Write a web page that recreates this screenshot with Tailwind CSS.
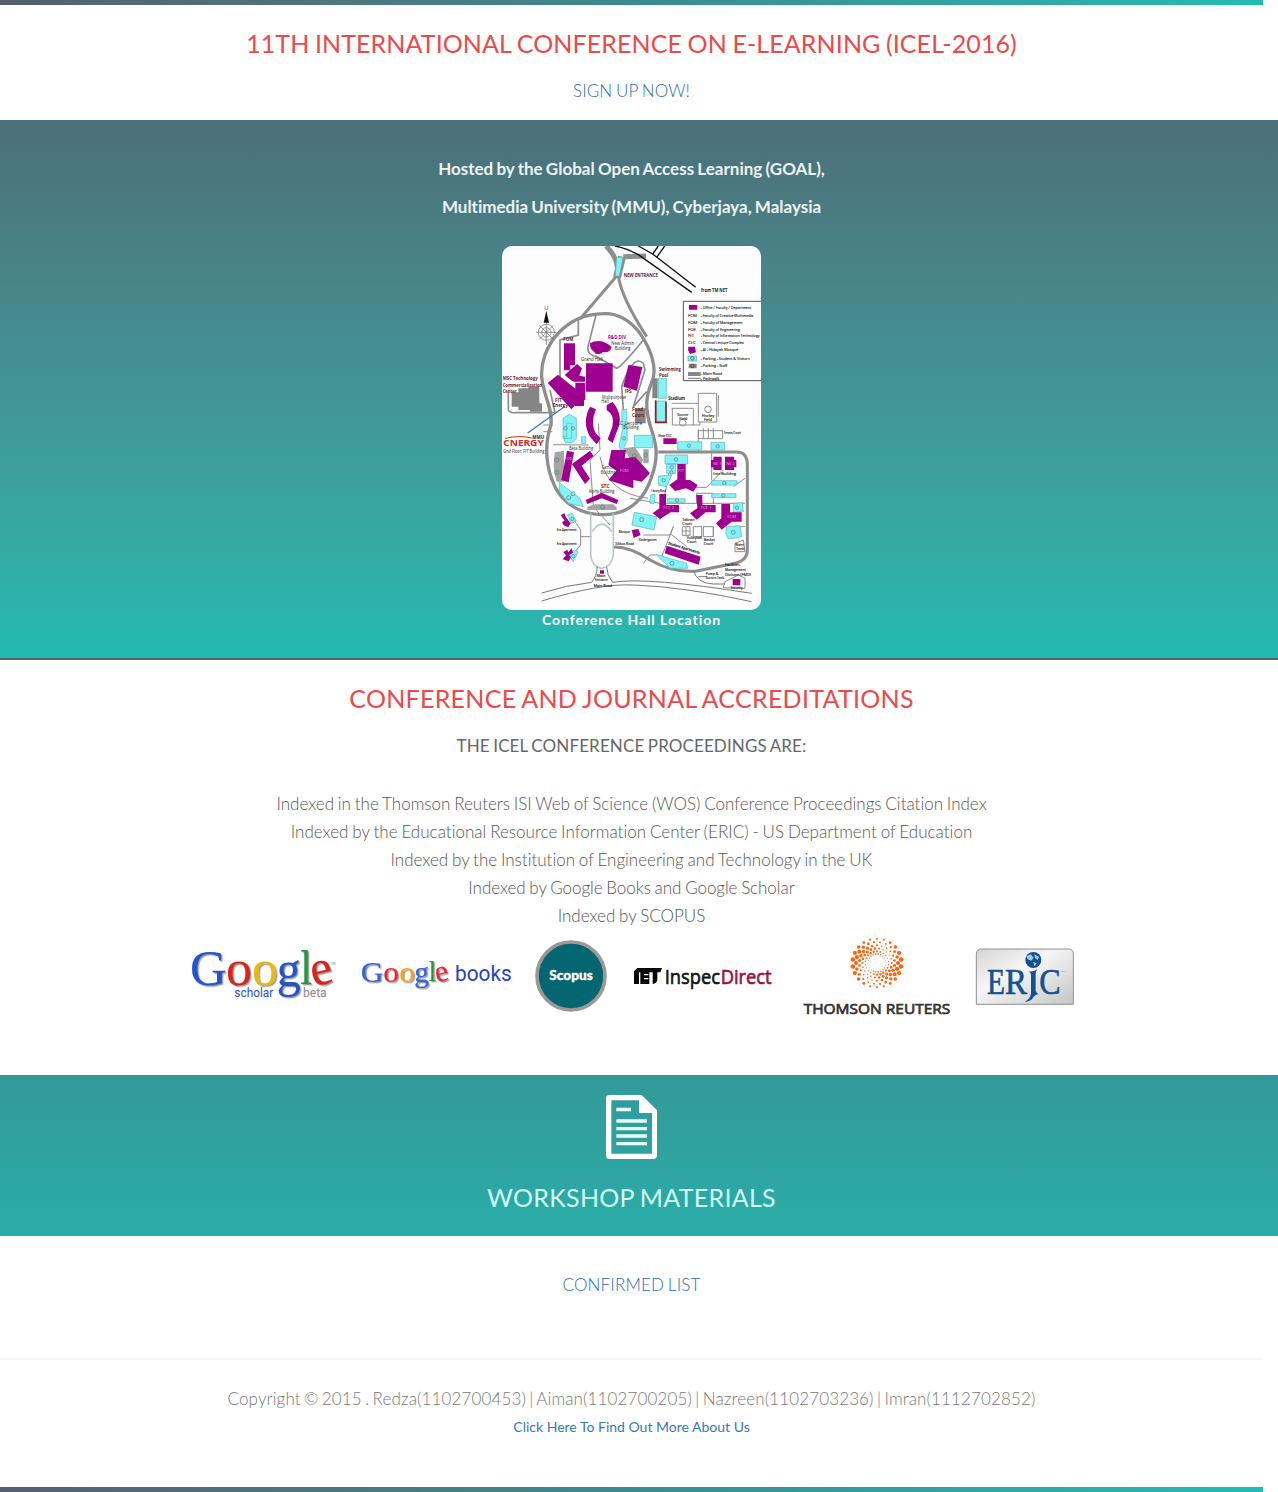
<!DOCTYPE html>
<html lang="en">
<head>
<meta charset="utf-8">
<title>ICEL-2016</title>
<script src="https://cdn.jsdelivr.net/npm/@tailwindcss/browser@4"></script>
</head>
<body class="bg-white font-['Lato',sans-serif] text-[#666] overflow-x-hidden [font-variant-ligatures:none]">
<div class="w-[1278px] h-[1492px] overflow-hidden flex flex-col text-center whitespace-nowrap">
  <div class="w-[1263px] h-[5px] bg-linear-to-r from-[#565f6e] via-[#3c8a8e] to-[#22bbb2]"></div>
  <header class="w-[1263px] h-[115px] flex flex-col items-center pt-[18px]">
    <h1 class="text-[25px] leading-10 text-[#ea4a4a] tracking-[0.1px] [word-spacing:-1px]">11TH INTERNATIONAL CONFERENCE ON E-LEARNING (ICEL-2016)</h1>
    <a class="mt-[14px] text-[17px] leading-7 font-light text-[#2a6db0] tracking-[0.12px] [word-spacing:-1px]">SIGN UP NOW!</a>
  </header>
  <section class="h-[540px] border-b-2 border-[#565f6e] bg-linear-to-b from-[#4b6f78] to-[#22bab1] text-white">
    <div class="w-[1263px] flex flex-col items-center pt-[30px]">
      <p class="text-[17px] leading-[38px] font-bold text-white/90 [word-spacing:-0.9px]">Hosted by the Global Open Access Learning (GOAL),</p>
      <p class="text-[17px] leading-[38px] font-bold text-white/90 [word-spacing:-1px]">Multimedia University (MMU), Cyberjaya, Malaysia</p>
      <svg id="map" class="mt-5 rounded-[10px] bg-[#fdfdfd]" width="259" height="364" viewBox="6 18 777 1092" font-family="Open Sans, sans-serif" font-size="17" fill="#222">
        <!-- roads -->
        <g fill="none" stroke="#8d8d8d">
          <path stroke-width="10" d="M310 221C190 223 120 325 125 410C130 470 158 500 153 555C130 620 140 690 165 740C190 790 240 824 310 824C400 824 440 760 455 710C480 640 465 600 450 555C435 500 438 470 454 430C474 390 455 330 420 280C390 240 350 218 310 221Z"/>
          <path stroke-width="24" d="M366 50L351 112"/><path stroke-width="15" d="M318 18Q350 50 352 82M438 48L370 50"/>
          <path stroke-width="9" d="M350 108L240 237M355 108Q365 175 440 290"/>
          <path stroke-width="9" d="M475 636H710Q742 636 742 675V930Q742 965 695 972L590 993Q520 1000 450 960Q390 920 342 921"/>
          <path stroke-width="5" d="M235 235V285L180 300V420M288 225L264 320Q260 345 290 350L350 385Q365 380 430 300M370 510L365 440Q400 340 430 370L435 390L400 500L440 455M25 455V510Q30 520 50 518H165L150 450"/>
          <path stroke-width="3" d="M130 555H157M130 575H157M160 614L265 615M295 550L300 630L270 660L280 800L330 855M300 650Q320 760 445 775M390 775L480 790H735M480 840L510 680M550 742H620L670 690M635 640V720M590 790V760H640V790M430 885H510L520 860L485 950M510 880L560 920M215 830L242 870V915L225 935M242 890H275M735 715L700 740M700 860H735M430 970L450 945H470"/>
          <path stroke="#b5c9c7" stroke-width="5" d="M272 820V945Q275 980 305 985Q335 980 340 945V820M277 875Q305 830 335 875"/>
          <path stroke="#777" stroke-width="3" d="M125 1059Q200 1035 275 1027Q290 1010 292 980M320 980Q320 1005 338 1027Q440 1010 755 1060M125 1083Q300 1030 400 1035Q550 1040 755 1085M580 990Q590 1030 640 1032H675M595 1010H620"/>
          <g stroke-width="3"><path d="M515 490H595M515 505H580V555M517 505V555H600V545M595 460H650V546H595ZM655 465V530M595 568V640M595 572H668V596H595ZM610 565V596M625 565V596M640 565V596M580 860H605V890H580ZM610 860H640V890H610ZM640 860V890M547 860H570V886H547ZM547 873H570M558 860V886M705 910L730 900L735 935L705 935ZM675 1025L715 1005L735 1015V1045L670 1043Z"/><circle cx="624" cy="508" r="10"/><circle cx="548" cy="548" r="10"/></g>
        </g>
        <g fill="none" stroke="#111" stroke-width="4"><path d="M345 18Q380 24 415 44L575 157M415 18L458 42L587 142M458 42L475 18M470 52L494 18"/></g>
        <!-- compass -->
        <g fill="none" stroke="#666" stroke-width="2"><circle cx="139" cy="277" r="24"/><circle cx="139" cy="277" r="14"/><path d="M108 277H170M139 245V315M118 256L160 298M160 256L118 298"/></g>
        <path fill="#111" d="M139 212L147 248H131Z"/><text x="133" y="209">U</text>
        <!-- grey buildings -->
        <g fill="#858585"><path d="M35 457H55V445H85V440H118V490H126V515H90V510H55V500H35ZM457 415H473V475H457ZM405 505H437V550H405Z"/><path fill="#a5a5a5" d="M165 637L192 632V725H170Q155 680 165 637ZM262 800L285 793H340L350 802V810H262ZM370 625L405 620L430 660L420 680L395 665ZM430 628H446V670H430Z"/></g>
        <!-- parking -->
        <g fill="#83f3f5" stroke="#58b3bb" stroke-width="2">
          <path d="M350 52H369L358 108H346Z"/><path d="M475 415H499V475H475ZM470 483H498V546H470Z"/>
          <path d="M189 535L208 523L229 535V595L218 608H196L189 590H200V550H215V595H189Z"/><path d="M365 512L380 507L382 600L366 635L357 620L367 570Z"/>
          <path d="M403 586H458V623H403ZM533 605H605V630H533ZM633 607H674V630H633ZM495 645H563V672H495ZM475 708L515 705L500 740L475 735ZM500 672H527V700H500ZM635 722H711V735H635ZM635 761H708V773H635ZM503 776H555V787H503ZM452 765L465 762L463 790H450ZM700 790L727 788L730 815L700 818ZM680 860L720 857L725 890L685 897L677 880ZM403 817L470 830L462 870L396 855ZM468 943L560 970L563 985L510 985ZM178 727L200 745L240 775L250 800L205 790L178 755ZM203 825L216 820L229 843L214 850ZM206 943L223 930L234 937L219 965ZM245 590H257V610H245Z"/>
        </g>
        <!-- faculty buildings -->
        <g fill="#a0008f">
          <path d="M192 310H225V376H211V391H192ZM194 405L231 372L246 385L238 407L255 410V425H222L212 420ZM143 429L174 404L226 446V428H256V480H252V498H225V485H234L214 508ZM258 370H338V455H258ZM270 310Q300 292 335 320Q330 340 308 336Q305 345 287 341L280 333Q269 327 270 310ZM385 375L427 381L411 452L370 440Z"/>
          <path d="M270 500L288 508Q270 550 287 580L302 595L290 613L270 590Q245 545 270 500ZM320 495L338 486Q374 530 350 575L338 609L323 598L337 560Q345 525 320 510Z"/>
          <path d="M201 632L222 637L206 727L184 720ZM216 672L270 632L281 648L245 677L270 716L255 732ZM257 780L305 758L355 780L350 792L305 775L262 792ZM334 630L378 630L374 655L405 650L450 700L425 725L400 720L400 745L325 720L349 692L325 675Z"/>
          <path d="M490 595H530V612H490ZM640 650H665V690H640V682H633V660H640ZM675 650H702V660H709V682H702V690H675ZM532 672H557V720H570L593 735L580 755L558 745L525 753L508 735L532 718ZM478 762H498V795H537V817H512L480 837L458 820L478 805ZM589 765H607V795H647V817H617L590 839L570 820L592 805ZM664 792H690V817H725V845H695L665 869L648 850L664 835ZM500 917L602 950L596 974L494 940ZM395 870L415 867L422 885L401 894ZM300 991H312V1001H300ZM698 1017H721V1036H698Z"/>
          <path d="M182 825L193 820L198 832L212 850L205 862L191 856L186 846L194 842ZM190 937L202 929L205 937L215 925L219 938L207 946L213 952L206 964L188 958L198 946Z"/>
        </g>
        <g fill="none" stroke="#921c21" stroke-width="5"><path d="M467 481V547H498V485"/></g>
        <path stroke="#3976c6" stroke-width="4" d="M83 579L193 500"/>
        <!-- parking symbols -->
        <g fill="none" stroke="#50787c" stroke-width="2"><circle cx="196" cy="565" r="5"/><circle cx="219" cy="565" r="5"/><circle cx="567" cy="617" r="5"/><circle cx="653" cy="619" r="5"/><circle cx="528" cy="658" r="5"/><circle cx="515" cy="682" r="5"/><circle cx="514" cy="697" r="5"/><circle cx="491" cy="721" r="5"/><circle cx="673" cy="729" r="5"/><circle cx="670" cy="767" r="5"/><circle cx="531" cy="781" r="5"/><circle cx="711" cy="803" r="5"/><circle cx="700" cy="877" r="6"/><circle cx="425" cy="839" r="6"/><circle cx="516" cy="970" r="6"/><circle cx="206" cy="773" r="6"/><circle cx="219" cy="761" r="6"/><circle cx="170" cy="660" r="6"/><circle cx="170" cy="697" r="6"/><circle cx="308" cy="801" r="6"/><circle cx="437" cy="645" r="5"/><circle cx="403" cy="648" r="6"/><circle cx="217" cy="837" r="5"/><circle cx="220" cy="949" r="5"/><circle cx="372" cy="595" r="5"/></g>
        <!-- legend -->
        <path d="M783 184H550V422H783" fill="#fefefe" stroke="#555" stroke-width="3"/>
        <path fill="#a0008f" d="M567 195H592V209H567ZM565 320L585 320L588 337L570 342L564 330Z"/>
        <path fill="#83f3f5" stroke="#333" d="M564 348H590V363H564Z"/><path fill="#888" d="M566 371H590V385H566ZM564 396H602V408H564Z"/><path stroke="#777" stroke-width="3" d="M564 415H603"/><g fill="none" stroke="#333" stroke-width="2"><circle cx="577" cy="355" r="5"/><circle cx="577" cy="378" r="5"/></g>
        <g font-size="13" stroke="#222" stroke-width=".4">
          <text x="602" y="207" textLength="152">- Office / Faculty / Department</text>
          <text x="564" y="231">FCM</text><text x="602" y="231" textLength="158">- Faculty of Creative Multimedia</text>
          <text x="564" y="252">FOM</text><text x="602" y="252" textLength="126">- Faculty of Management</text>
          <text x="564" y="272">FOE</text><text x="602" y="272" textLength="118">- Faculty of Engineering</text>
          <text x="564" y="292">FIT</text><text x="602" y="292" textLength="177">- Faculty of Information Technology</text>
          <text x="564" y="311">CLC</text><text x="602" y="311" textLength="130">- Central Lecture Complex</text>
          <text x="602" y="333" textLength="112">- Al - Hidayah Mosque</text>
          <text x="602" y="360" textLength="147">- Parking - Student &amp; Visitors</text>
          <text x="602" y="382" textLength="80">- Parking - Staff</text>
          <text x="602" y="404" textLength="64">- Main Road</text><text x="602" y="419" textLength="56">- Pathwalk</text>
        </g>
        <!-- place names -->
        <g font-weight="700" font-size="15" fill="#72191c">
          <text x="371" y="110" textLength="103">NEW ENTRANCE</text><text x="190" y="304" textLength="30">FOM</text><text x="8" y="421" textLength="105">MSC Technology</text><text x="8" y="440" textLength="119">Commercialization</text><text x="8" y="458" textLength="42">Center</text><text x="165" y="486" textLength="20">FIT</text><text x="158" y="501" textLength="46">Energy</text><text x="374" y="459" textLength="21">IPS</text><text x="477" y="394" textLength="66">Swimming</text><text x="477" y="411" textLength="28">Pool</text><text x="396" y="512" textLength="34">Food</text><text x="396" y="530" textLength="36">Court</text><text x="304" y="745" textLength="24">STC</text>
          <text x="324" y="296" textLength="54" fill="#a0008f">R&amp;D DIV</text>
          <g fill="#222"><text x="603" y="155" textLength="79">from TM NET</text><text x="505" y="481" textLength="50">Stadium</text><text x="97" y="598" textLength="35">MMU</text></g>
          <text x="10" y="619" font-size="24" textLength="121" fill="#d32e25">CNERGY</text>
        </g>
        <path stroke="#d32e25" stroke-width="3" d="M15 595Q60 585 95 594" fill="none"/>
        <g font-size="14">
          <text x="10" y="639" textLength="123">Gnd Floor, FIT Building</text><text x="334" y="315" textLength="68">New Admin</text><text x="344" y="329" textLength="48">Building</text><text x="243" y="364" textLength="65">Grand Hall</text><text x="306" y="477" textLength="72">Multipurpose</text><text x="304" y="490" textLength="22">Hall</text><text x="342" y="554" textLength="85">CLC Lecture</text><text x="370" y="568" textLength="46">Building</text><text x="208" y="629" textLength="71">Beta Building</text><text x="305" y="688" textLength="40">Gamma</text><text x="302" y="701" textLength="44">Building</text><text x="266" y="760" textLength="77">Alpha Building</text>
        </g>
        <g font-size="11" stroke="#222" stroke-width=".4">
          <text x="170" y="874" textLength="60">Era Apartment</text><text x="170" y="916" textLength="60">Era Apartment</text><text x="281" y="1041" textLength="55">Main Road</text><text x="290" y="1010">Main</text><text x="285" y="1022" textLength="38">Entrance</text><text x="356" y="880" textLength="34">Mosque</text><text x="346" y="915" textLength="56">Silibus Road</text><text x="416" y="902" textLength="54">Kindergarten</text><text x="532" y="529">Soccer</text><text x="538" y="541">Field</text><text x="606" y="532">Hockey</text><text x="612" y="544">Field</text><text x="671" y="582" textLength="52">Tennis Court</text><text x="475" y="592" textLength="40">New CLC</text><text x="640" y="705" textLength="68">Inte Building</text><text x="454" y="757" textLength="44">Library Road</text><text x="547" y="842">Tabran</text><text x="547" y="854">Court</text><text x="561" y="896" textLength="44">Volleyball</text><text x="561" y="908">Court</text><text x="611" y="902">Basket</text><text x="611" y="914">Court</text><text x="706" y="918" textLength="26">Water</text><text x="708" y="930">Tank</text><text x="504" y="913" textLength="98" transform="rotate(17 504 913)" font-weight="700">Student Apartments</text><text x="675" y="979" textLength="44">Facilities</text><text x="675" y="993" textLength="63">Management</text><text x="675" y="1007" textLength="78">Division (FMD)</text><text x="617" y="1006" textLength="38">Pump &amp;</text><text x="617" y="1018" textLength="55">Suction Tank</text><text x="692" y="1047" textLength="36">Security</text>
        </g>
        <g font-size="13" fill="#e8a8e0"><text x="639" y="674" textLength="25">NE 1</text><text x="679" y="674" textLength="25">NE 2</text><text x="360" y="695" textLength="26">FCM</text><text x="193" y="660" textLength="24">FOE</text><text x="535" y="695">FIT</text><text x="490" y="807">FCE 2</text><text x="602" y="807">FCE 1</text><text x="682" y="835">FCM</text></g>
      </svg>
      <p class="text-[14px] leading-5 font-bold tracking-[0.93px]">Conference Hall Location</p>
    </div>
  </section>
  <section class="w-[1263px] h-[415px] flex flex-col items-center pt-[18px]">
    <h2 class="text-[25px] leading-10 text-[#ea4a4a] tracking-[0.28px] [word-spacing:-1px]">CONFERENCE AND JOURNAL ACCREDITATIONS</h2>
    <h3 class="mt-[14px] text-[17px] leading-7 tracking-[0.12px] [word-spacing:-1px]">THE ICEL CONFERENCE PROCEEDINGS ARE:</h3>
    <div class="mt-[30px] text-[17px] leading-7 font-light text-[#555] [word-spacing:-0.8px]">
      <p>Indexed in the Thomson Reuters ISI Web of Science (WOS) Conference Proceedings Citation Index</p>
      <p class="tracking-[0.02px]">Indexed by the Educational Resource Information Center (ERIC) - US Department of Education</p>
      <p>Indexed by the Institution of Engineering and Technology in the UK</p>
      <p class="tracking-[-0.06px]">Indexed by Google Books and Google Scholar</p>
      <p>Indexed by SCOPUS</p>
    </div>
    <div class="self-start flex ml-[188px]">
      <svg class="mr-[22px]" width="150" height="95" viewBox="24 0 450 285">
        <defs><filter id="sh" x="-10%" y="-10%" width="120%" height="130%"><feDropShadow dx="4" dy="4" stdDeviation="2" flood-color="#555" flood-opacity=".6"/></filter></defs>
        <g font-family="Liberation Serif, serif" filter="url(#sh)" stroke-width=".6"><text x="30" y="165" font-size="150" textLength="110" lengthAdjust="spacingAndGlyphs" fill="#2456c8" stroke="#2456c8">G</text><text x="138" y="165" font-size="150" textLength="78" lengthAdjust="spacingAndGlyphs" fill="#d4281c" stroke="#d4281c">o</text><text x="216" y="165" font-size="150" textLength="78" lengthAdjust="spacingAndGlyphs" fill="#e6b812" stroke="#e6b812">o</text><text x="290" y="167" font-size="150" textLength="72" lengthAdjust="spacingAndGlyphs" fill="#2456c8" stroke="#2456c8">g</text><text x="361" y="161" font-size="147" textLength="35" lengthAdjust="spacingAndGlyphs" fill="#27963c" stroke="#27963c">l</text><text x="392" y="163" font-size="150" textLength="66" lengthAdjust="spacingAndGlyphs" fill="#d4281c" stroke="#d4281c" transform="rotate(-14 425 130)">e</text></g>
        <g font-family="Roboto, sans-serif" font-size="37"><text x="163" y="201" textLength="117" lengthAdjust="spacingAndGlyphs" fill="#304fc2">scholar</text><text x="369" y="201" textLength="71" lengthAdjust="spacingAndGlyphs" fill="#888">beta</text><text x="454" y="104" font-size="8" fill="#666">TM</text></g>
      </svg>
      <svg class="mr-[21px]" width="154" height="95" viewBox="540 0 462 285">
        <g font-family="Liberation Serif, serif" filter="url(#sh)" font-size="90" stroke-width=".6"><text x="542" y="155" textLength="68" lengthAdjust="spacingAndGlyphs" fill="#3565d0" stroke="#3565d0">G</text><text x="610" y="155" textLength="47" lengthAdjust="spacingAndGlyphs" fill="#e02c35" stroke="#e02c35">o</text><text x="658" y="155" textLength="47" lengthAdjust="spacingAndGlyphs" fill="#f5a316" stroke="#f5a316">o</text><text x="703" y="156" textLength="44" lengthAdjust="spacingAndGlyphs" fill="#3565d0" stroke="#3565d0">g</text><text x="746" y="152" textLength="22" lengthAdjust="spacingAndGlyphs" fill="#27963c" stroke="#27963c">l</text><text x="766" y="153" textLength="40" lengthAdjust="spacingAndGlyphs" fill="#e02c35" stroke="#e02c35" transform="rotate(-14 786 135)">e</text></g>
        <text x="825" y="152" font-family="Roboto, sans-serif" font-size="65" textLength="170" lengthAdjust="spacingAndGlyphs" fill="#2443bd">books</text>
      </svg>
      <svg class="mr-[23px]" width="72" height="95" viewBox="45 0 216 285"><circle cx="153" cy="138" r="102" fill="#046670" stroke="#999" stroke-width="11"/><text x="88" y="149" font-family="Lato, sans-serif" font-weight="900" font-size="39" textLength="130" lengthAdjust="spacingAndGlyphs" fill="#fff" stroke="#fff">Scopus</text></svg>
      <svg class="mr-[22px]" width="150" height="95" viewBox="330 0 450 285"><path fill="#080808" d="M342 124L352 114H426L421 127H412V150Q410 161 398 162V127H388V162H358V114H375V127H362V133H375V144H362V150H375V162H342Z"/><path d="M359 127V162M385 134H372M385 146H372" stroke="#fff" stroke-width="4"/><g font-family="Open Sans, sans-serif" font-size="62" stroke-width="2"><text x="434" y="161" textLength="166" lengthAdjust="spacingAndGlyphs" fill="#111" stroke="#111">Inspec</text><text x="602" y="161" textLength="153" lengthAdjust="spacingAndGlyphs" fill="#9c1040" stroke="#9c1040">Direct</text></g></svg>
      <svg class="mr-[23px]" width="150" height="95" viewBox="36 0 450 285"><g id="dots" fill="#fa6410"></g><text x="41" y="251" font-family="Open Sans, sans-serif" font-weight="500" font-size="44" textLength="440" lengthAdjust="spacingAndGlyphs" fill="#333" stroke="#333" stroke-width="2.2">THOMSON REUTERS</text></svg>
      <svg width="100" height="95" viewBox="555 0 300 285"><defs><linearGradient id="eg" x2="1" y2="1"><stop stop-color="#d5d5d5"/><stop offset=".4" stop-color="#f6f6f6"/><stop offset="1" stop-color="#c5c5c5"/></linearGradient></defs><path d="M559 223V72Q559 57 575 57H834Q850 57 850 72V223Z" fill="url(#eg)" stroke="#909090" stroke-width="3"/><g font-family="Liberation Serif, serif" fill="#15518f" stroke="#15518f" stroke-width="2"><text x="591" y="193" font-size="110" textLength="54" lengthAdjust="spacingAndGlyphs">E</text><text x="645" y="193" font-size="110" textLength="66" lengthAdjust="spacingAndGlyphs">R</text><text x="748" y="193" font-size="110" textLength="64" lengthAdjust="spacingAndGlyphs">C</text></g><path fill="#15518f" d="M716 124Q728 127 742 118Q737 124 737 134V182Q739 189 746 192Q735 194 731 200Q724 214 704 216Q722 206 723 190V134Q722 128 716 124Z"/><circle cx="730" cy="90" r="24" fill="#15518f"/><path d="M709 79L722 73L731 83L724 92L713 88ZM733 73L747 81L743 90L735 84ZM730 96L740 100L733 109Z" fill="#9ecbe6"/><text x="814" y="126" font-family="Lato" font-size="7" fill="#15518f">TM</text></svg>
    </div>
  </section>
  <section class="h-[161px] bg-linear-to-b from-[#339999] to-[#29ada8] text-[#d2fcf8]">
    <div class="w-[1263px] flex flex-col items-center pt-5">
      <svg width="51" height="64" viewBox="48 30 153 192"><path fill="#fff" fill-rule="evenodd" d="M58 30H155L201 76V211Q201 222 190 222H58Q48 222 48 211V40Q48 30 58 30ZM64 46V206H186V84H147V46Z"/><path fill="#e9ffff" d="M79 68H123V79H79ZM79 103H171V113H79ZM79 126H171V136H79ZM79 148H171V158H79ZM79 171H171V181H79Z"/></svg>
      <h2 class="mt-[18px] text-[25px] leading-10 tracking-[0.28px] [word-spacing:-1px]">WORKSHOP MATERIALS</h2>
    </div>
  </section>
  <div class="w-[1263px] h-[122px] pt-[35px] text-[17px] leading-7 font-light text-[#2a6db0] tracking-[0.16px] [word-spacing:-1px]">CONFIRMED LIST</div>
  <footer class="w-[1263px] h-[129px] border-t-2 border-[#f5f5f5] pt-[25px]">
    <p class="text-[17px] leading-7 font-light text-[#777] tracking-[0.13px] [word-spacing:-1.4px]">Copyright © 2015 . Redza(1102700453) | Aiman(1102700205) | Nazreen(1102703236) | Imran(1112702852)</p>
    <p class="mt-1 text-[14px] leading-5 text-[#337ab7]">Click Here To Find Out More About Us</p>
  </footer>
  <div class="w-[1263px] h-[5px] bg-linear-to-r from-[#565f6e] via-[#3c8a8e] to-[#22bbb2]"></div>
</div>
<script>
// Map labels are condensed glyph by glyph to their given length
document.querySelectorAll('#map [textLength]').forEach(function (t) {
  t.setAttribute('lengthAdjust', 'spacingAndGlyphs');
});
// Dotted rings of the Thomson Reuters mark
var dots = '';
[[27,1.8],[35,2.6],[44,3.2],[53,3.8],[63,4.5],[73,5]].forEach(function (r, i) {
  for (var k = 0; k < 22; k++) {
    var a = (k + (i % 2) / 2) * Math.PI / 11;
    var s = r[1] * (1 + 0.4 * Math.cos(2 * (a - (5 - i) * 0.28)));
    dots += '<circle cx="' + (261 + r[0] * Math.cos(a)).toFixed(1) + '" cy="' + (99 + r[0] * Math.sin(a)).toFixed(1) + '" r="' + s.toFixed(1) + '"/>';
  }
});
document.getElementById('dots').innerHTML = dots;
</script>
</body>
</html>
